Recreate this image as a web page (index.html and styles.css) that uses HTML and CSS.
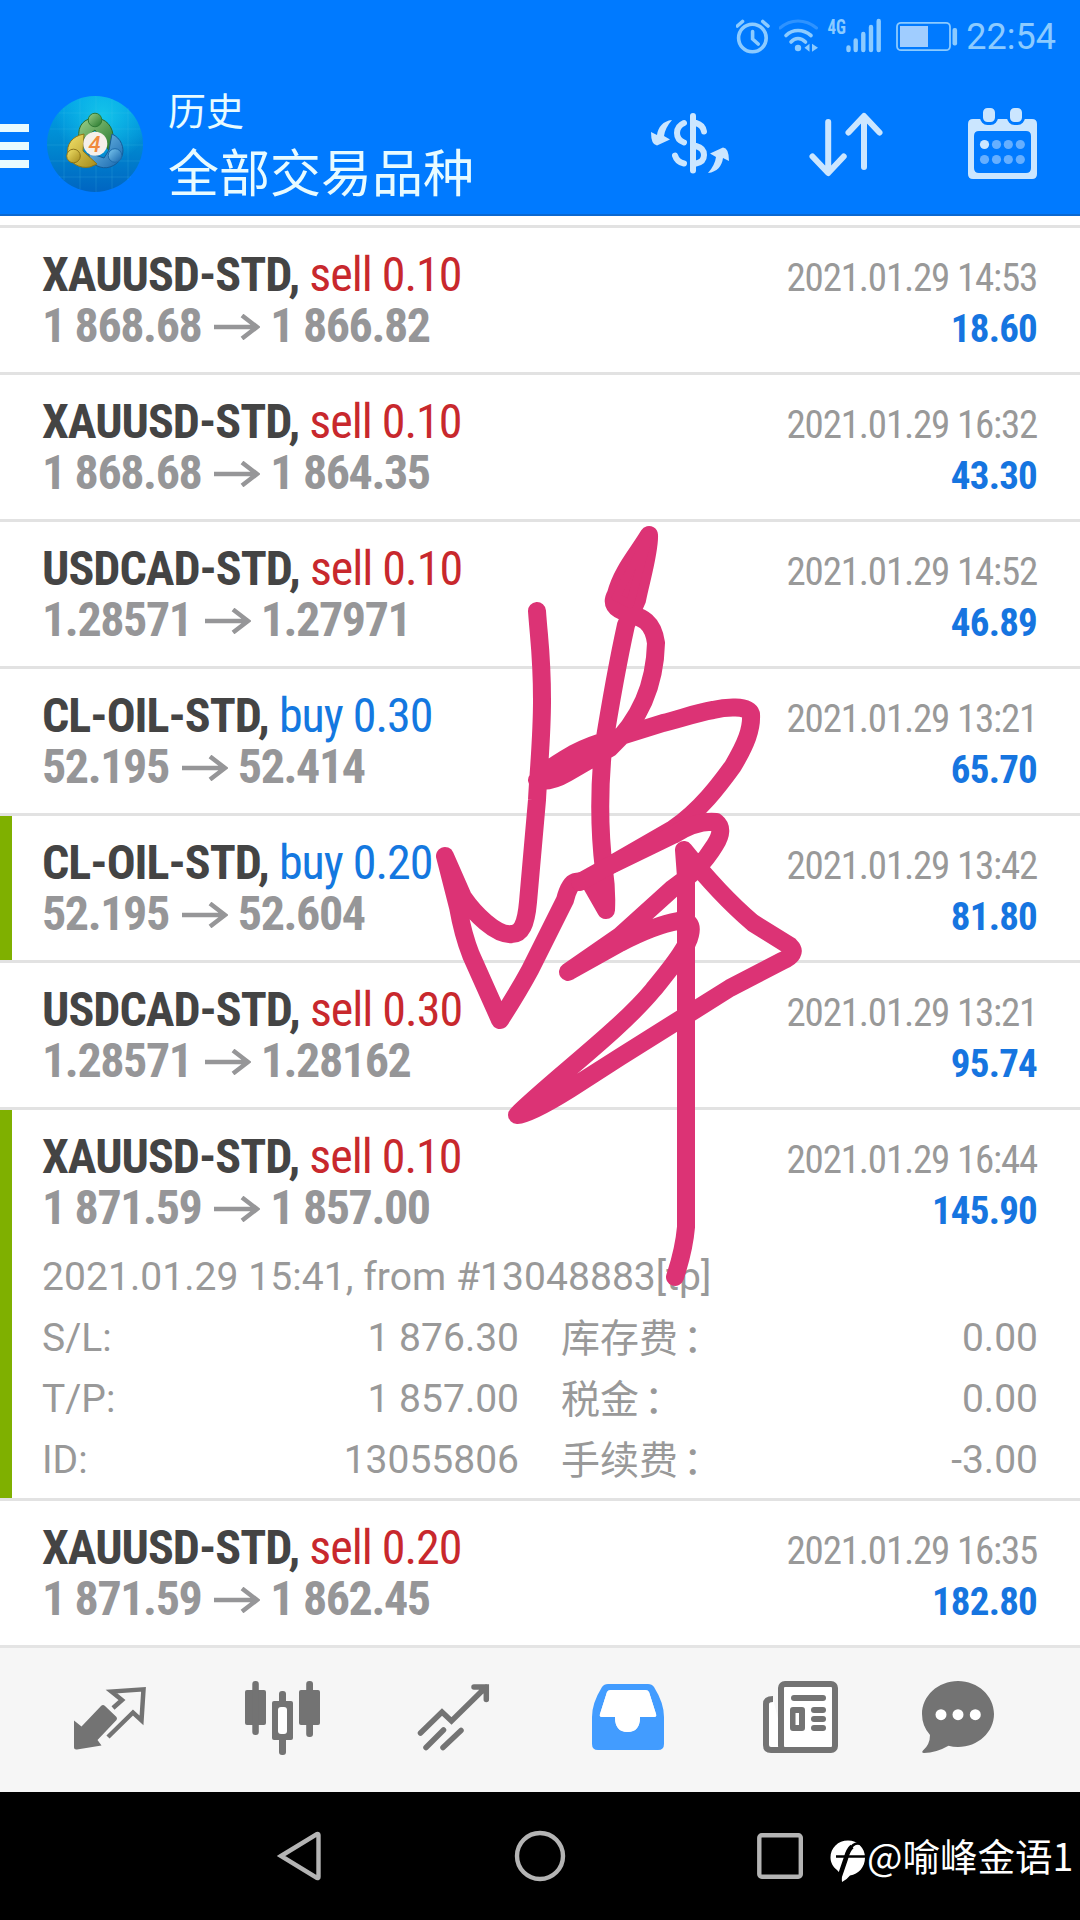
FILE: index.html
```html
<!DOCTYPE html>
<html lang="zh-CN">
<head>
    <meta charset="UTF-8">
    <meta name="viewport" content="width=device-width, initial-scale=1.0">
    <title>历史 - 全部交易品种</title>
    <link rel="stylesheet" href="styles.css">
</head>
<body>
    <div class="screen">
        <header class="header">
            <div class="status">
                <svg class="alarm" width="34" height="36" viewBox="735 18 34 36">
                    <circle cx="751.4" cy="38" r="13.8"/>
                    <path d="M751.6 31.5V39l5.6 5M736.3 26l5.2-4.5M767 26l-5.2-4.5"/>
                </svg>
                <svg class="wifi" width="40" height="36" viewBox="778 18 40 36">
                    <path class="faint" d="M779 28Q787 21 797 21T815.5 28"/>
                    <path d="M785 35.5Q790 30.5 797 30.5T810 35.5M790 42Q793 38.5 797 38.5T804.5 42"/>
                    <path class="solid" d="M803.5 47.7l5-4v8zM811 43.7v8l6-4z"/>
                    <circle class="solid" cx="797" cy="48" r="3.2"/>
                </svg>
                <svg class="signal" width="54" height="36" viewBox="827 18 54 36">
                    <text x="826.5" y="33.8" textLength="18.5" lengthAdjust="spacingAndGlyphs">4G</text>
                    <path d="M847.5 47.5v2.5M854.7 40.5V50M862.3 34v16M870 27v23M877.7 21v29"/>
                </svg>
                <svg class="battery" width="62" height="36" viewBox="895.5 18 62 36">
                    <rect class="case" x="896.5" y="22.8" width="53" height="27.4" rx="4"/>
                    <rect class="level" x="899.5" y="26" width="28" height="21"/>
                    <rect class="nub" x="952" y="28" width="4.6" height="17.5" rx="2"/>
                </svg>
                <span class="time">22:54</span>
            </div>
            <div class="toolbar">
                <div class="menu"><i></i><i></i><i></i></div>
                <svg class="logo" width="96" height="96" viewBox="0 0 96 96">
                    <defs>
                        <linearGradient id="sky" x1="0" y1="0" x2="0" y2="1">
                            <stop offset="0" stop-color="#00a3ea"/>
                            <stop offset=".5" stop-color="#0089d0"/>
                            <stop offset="1" stop-color="#0065c2"/>
                        </linearGradient>
                        <radialGradient id="glow" cx=".58" cy=".2" r=".5">
                            <stop offset="0" stop-color="#14c4ea"/>
                            <stop offset="1" stop-color="#14c4ea" stop-opacity="0"/>
                        </radialGradient>
                        <linearGradient id="green" x1="0" y1="0" x2="1" y2="1">
                            <stop offset="0" stop-color="#9bd08a"/>
                            <stop offset="1" stop-color="#24762a"/>
                        </linearGradient>
                        <linearGradient id="gold" x1="0" y1="0" x2="1" y2="1">
                            <stop offset="0" stop-color="#f3e36a"/>
                            <stop offset="1" stop-color="#a58a1a"/>
                        </linearGradient>
                        <linearGradient id="blue" x1="0" y1="0" x2="1" y2="1">
                            <stop offset="0" stop-color="#7cc8ef"/>
                            <stop offset="1" stop-color="#1463ab"/>
                        </linearGradient>
                    </defs>
                    <circle cx="48" cy="48" r="48" fill="url(#sky)"/>
                    <circle cx="48" cy="48" r="48" fill="url(#glow)"/>
                    <path class="mesh" d="M17 12v72M33 3v90M49 0v96M65 3v90M81 12v72M12 17h72M3 33h90M0 49h96M3 65h90M12 81h72"/>
                    <path d="M32 42C30 29 38 22 48 22S67 30 66 43L63 56 48 34 35 44Z" fill="url(#green)" stroke="#2a6b2a"/>
                    <path d="M65 38C74 42 78 52 75 60S62 74 53 71 42 64 42 57L57 62 62 54Z" fill="url(#blue)" stroke="#155c98"/>
                    <path d="M37 38C25 40 19 49 21 58S32 73 43 71L50 68 36 55Z" fill="url(#gold)" stroke="#8c7518"/>
                    <circle cx="48" cy="24" r="6.8" fill="url(#green)" stroke="#2f7a35"/>
                    <circle cx="26.5" cy="60" r="6.8" fill="url(#gold)" stroke="#8c7518"/>
                    <circle cx="68" cy="59.5" r="6.8" fill="url(#blue)" stroke="#1d6bab"/>
                    <circle cx="48.3" cy="47.7" r="12" fill="#f5f0ea"/>
                    <text x="47.5" y="55.5">4</text>
                </svg>
                <div class="title">
                    <p>历史</p>
                    <h1>全部交易品种</h1>
                </div>
                <svg class="action" width="80" height="76" viewBox="650 105 80 76">
                    <path d="M693 115v54.5M684 122Q677 125 677 132T684 141.5M696 122Q703 124 704 130.500M696 145Q704 147 704 154T696 162.500M675 154.500Q677 161 684 162.500"/>
                    <path id="turn" class="solid" d="M672 119C663 120 658 126 657 134L651 131Q651 144 657 144.500L670 138.500 664 135Q665 127 672 119Z"/>
                    <use href="#turn" transform="rotate(180 690 145.500)"/>
                </svg>
                <svg class="action sort" width="76" height="76" viewBox="808 105 76 76">
                    <path d="M828.200 121v50M812.500 155.500l15.700 16.500 15.500-16.500M864 116v50M848.500 131.500L864 115l15.500 16.500"/>
                </svg>
                <svg class="action calendar" width="70" height="76" viewBox="968 105 70 76">
                    <path class="solid" fill-rule="evenodd" d="M973 118h59q5 0 5 5v50q0 5-5 5h-59q-5 0-5-5v-50q0-5 5-5zM979 130q-5 0-5 5v32q0 5 5 5h47q5 0 5-5v-32q0-5-5-5z"/>
                    <rect class="ring" x="981.500" y="105.500" width="15" height="17" rx="6"/>
                    <rect class="ring" x="1008.500" y="105.500" width="15" height="17" rx="6"/>
                    <circle class="solid" cx="984.500" cy="143.500" r="4.600"/>
                    <g class="dim">
                        <circle cx="996.500" cy="143.500" r="4.600"/>
                        <circle cx="1008.300" cy="143.500" r="4.600"/>
                        <circle cx="1020.300" cy="143.500" r="4.600"/>
                        <circle cx="984.500" cy="158.500" r="4.600"/>
                        <circle cx="996.500" cy="158.500" r="4.600"/>
                        <circle cx="1008.300" cy="158.500" r="4.600"/>
                        <circle cx="1020.300" cy="158.500" r="4.600"/>
                    </g>
                </svg>
            </div>
        </header>

        <main class="list" id="list"></main>

        <nav class="tabs">
            <svg width="76" height="76" viewBox="72 1680 76 76">
                <path class="fill" d="M74 1720.500l7.500 6L101 1706q2-2 4 0l11.500 11q1 1.500 0 3L97.500 1740l4 5.500-24.500 4q-3 .500-3-2z"/>
                <path d="M113 1708l9-8-10.500-8.500 32-2.200-2 31-8.500-7.800-25 24.500"/>
            </svg>
            <svg width="76" height="76" viewBox="244 1680 76 76">
                <g class="fill">
                    <rect x="244" y="1690" width="21" height="35" rx="2"/>
                    <rect x="251.300" y="1681" width="6.500" height="54" rx="3"/>
                    <rect x="298" y="1690" width="21" height="35" rx="2"/>
                    <rect x="305.200" y="1681" width="6.800" height="56" rx="3"/>
                    <rect x="278" y="1691" width="7" height="64" rx="3"/>
                    <rect x="271" y="1701" width="21" height="39" rx="2"/>
                </g>
                <rect class="hole" x="277" y="1707" width="9" height="27" rx="3"/>
            </svg>
            <svg width="76" height="76" viewBox="417 1680 76 76">
                <path class="round" d="M420.500 1733l21.500-21 9.500 9 34.500-34M474 1687h12.300v12.500M426 1747.500l17.500-17.500M443 1747.500l18-17"/>
            </svg>
            <svg class="active" width="76" height="76" viewBox="589 1680 76 76">
                <path class="fill" fill-rule="evenodd" d="M607 1684h40q4 0 6 3 10 16 10 30v27q0 6-6 6h-60q-6 0-6-6v-27q0-14 10-30 2-3 6-3zM610 1690q-3 0-4 2l-7 22q-1 3 2 3h13q0 15 12.500 15t12.500-15h14q3 0 2-3l-7-22q-1-2-4-2z"/>
                <path class="white" d="M610 1690q-3 0-4 2l-7 22q-1 3 2 3h13q0 15 12.500 15t12.500-15h14q3 0 2-3l-7-22q-1-2-4-2z"/>
            </svg>
            <svg width="78" height="76" viewBox="762 1680 78 76">
                <path class="tab-edge" d="M773 1699q-7 0-7 5v41q0 5 5 5h15"/>
                <rect class="page" x="781" y="1684" width="54" height="66" rx="4"/>
                <g class="fill">
                    <rect x="791" y="1695" width="35" height="6" rx="3"/>
                    <path fill-rule="evenodd" d="M793 1707h9q3 0 3 3v18q0 3-3 3h-9q-3 0-3-3v-18q0-3 3-3zM795.500 1713v12h3.500v-12z"/>
                    <rect x="811" y="1707" width="15" height="6" rx="3"/>
                    <rect x="811" y="1716" width="15" height="6" rx="3"/>
                    <rect x="811" y="1725" width="15" height="6" rx="3"/>
                </g>
            </svg>
            <svg class="chat" width="74" height="76" viewBox="921 1680 74 76">
                <path class="fill" d="M958 1681c20 0 36 15 36 33s-16 33-36 33q-5 0-9.500-1.200Q936 1753 924 1753q-3-.500-1-2.500 7-6 7-15.500-8-9-8-21c0-18 16-33 36-33z"/>
                <g class="white">
                    <circle cx="941" cy="1714.700" r="5.500"/>
                    <circle cx="958" cy="1714.700" r="5.500"/>
                    <circle cx="975.300" cy="1714.700" r="5.500"/>
                </g>
            </svg>
        </nav>

        <footer class="softkeys">
            <svg class="back" width="46" height="54" viewBox="276 1829 46 54">
                <path d="M281 1856l36-22q1.500-.500 1.500 1v42q0 1.500-1.500 1z"/>
            </svg>
            <svg class="home" width="54" height="54" viewBox="513 1829 54 54">
                <circle cx="540" cy="1856" r="23"/>
            </svg>
            <svg class="recent" width="50" height="54" viewBox="755 1829 50 54">
                <rect x="759.300" y="1835.300" width="41.500" height="41.500" rx="2.500"/>
            </svg>
            <div class="watermark">
                <svg width="37" height="44" viewBox="829 1839 37 44">
                    <path class="disc" d="M848 1840.500c9.500 0 17 7.500 17 17s-6.500 17-15 18q-3 4-8 6.500l-.500-7-4.500-5c-4-3-6.500-7.500-6.500-12.500 0-9.500 7.500-17 17.500-17z"/>
                    <path class="cut stem" d="M852 1846.500Q848 1850 846 1858L838.500 1880"/>
                    <path class="cut" d="M862 1844.500Q854 1841 849.500 1850M836 1856.500h30"/>
                </svg>
                <span>@喻峰金语1</span>
            </div>
        </footer>

        <!-- pen signature over the list -->
        <svg class="pen" width="1080" height="1920" viewBox="0 0 1080 1920">
            <path d="M537 611C539 640 542 655 542 700C542 740 538 777 537 800L528 902C526 925 521 934 512 934C496 936 474 913 463 897L445 856L458 907Q463 935 471 955L500 1020Q517 994 530 970L565 900Q569 884 575 882C590 881 595 874 607 867L673 829C700 811 720 784 733 766C746 744 752 729 751 714C748 705 725 707 713 710C695 713 680 719 663 723L615 738Q590 745 573 754Q545 770 537 780Q550 783 567 773L610 748C640 720 655 685 656 643C653 620 640 617 628 613C614 609 611 603 616 594C622 571 637 555 649 535C650 550 641 580 637 600L626 625Q615 675 603 750Q597 812 604 870Q607 890 606 910L590 882"/>
            <path d="M580 882L607 867L673 835Q697 820 716 822Q725 829 715 845Q700 870 672 889L620 936 568 972L620 943Q655 925 678 921Q694 919 690 935C687 950 665 975 653 990C620 1030 550 1082 517 1115Q530 1114 570 1089L620 1057L730 988L782 961Q798 954 790 946L753 923Q720 895 684 850L686 877V1227Q684 1250 675 1277"/>
            <path class="blot" d="M649 535L616 597 630 604Z"/>
        </svg>
    </div>
    <script>
        const orders = [
            { symbol: "XAUUSD-STD", side: "sell", lots: "0.10", open: "1 868.68", close: "1 866.82", time: "2021.01.29 14:53", profit: "18.60" },
            { symbol: "XAUUSD-STD", side: "sell", lots: "0.10", open: "1 868.68", close: "1 864.35", time: "2021.01.29 16:32", profit: "43.30" },
            { symbol: "USDCAD-STD", side: "sell", lots: "0.10", open: "1.28571", close: "1.27971", time: "2021.01.29 14:52", profit: "46.89" },
            { symbol: "CL-OIL-STD", side: "buy", lots: "0.30", open: "52.195", close: "52.414", time: "2021.01.29 13:21", profit: "65.70" },
            { symbol: "CL-OIL-STD", side: "buy", lots: "0.20", open: "52.195", close: "52.604", time: "2021.01.29 13:42", profit: "81.80", marked: true },
            { symbol: "USDCAD-STD", side: "sell", lots: "0.30", open: "1.28571", close: "1.28162", time: "2021.01.29 13:21", profit: "95.74" },
            { symbol: "XAUUSD-STD", side: "sell", lots: "0.10", open: "1 871.59", close: "1 857.00", time: "2021.01.29 16:44", profit: "145.90", marked: true,
              note: "2021.01.29 15:41, from #13048883[tp]",
              details: [["S/L:", "1 876.30", "库存费", "0.00"], ["T/P:", "1 857.00", "税金", "0.00"], ["ID:", "13055806", "手续费", "-3.00"]] },
            { symbol: "XAUUSD-STD", side: "sell", lots: "0.20", open: "1 871.59", close: "1 862.45", time: "2021.01.29 16:35", profit: "182.80" }
        ];

        const arrow = '<svg class="arrow" width="46" height="26" viewBox="0 0 46 26"><path d="M0 13h43M28 1.500L43 13 28 24.500"/></svg>';

        function renderDetails(order) {
            if (!order.details) return "";
            const rows = order.details.map(([key, value, label, amount]) => `
                <span>${key}</span><span>${value}</span>
                <span class="label">${label}<b>：</b></span><span>${amount}</span>`).join("");
            return `<div class="note">${order.note}</div><div class="details">${rows}</div>`;
        }

        document.getElementById("list").innerHTML = orders.map(order => `
            <article class="order ${order.marked ? "marked" : ""}">
                <div class="line">
                    <div class="name">${order.symbol}, <span class="${order.side}">${order.side} ${order.lots}</span></div>
                    <div class="date">${order.time}</div>
                </div>
                <div class="line">
                    <div class="price"><span>${order.open}</span>${arrow}<span>${order.close}</span></div>
                    <div class="profit">${order.profit}</div>
                </div>
                ${renderDetails(order)}
            </article>`).join("");
    </script>
</body>
</html>
```
FILE: styles.css
```css
* {
    box-sizing: border-box;
}

body {
    margin: 0;
    background: #fff;
    font-family: Roboto, "Noto Sans CJK SC", sans-serif;
}

svg {
    display: block;
    flex: none;
    fill: none;
}

.screen {
    position: relative;
    width: 1080px;
    height: 1920px;
    display: flex;
    flex-direction: column;
    overflow: hidden;
}

/* header */
.header {
    height: 216px;
    background: #007aff;
    border-bottom: 2px solid #0c68d0;
    color: #e8fbff;
}

.status {
    height: 72px;
    padding: 0 24px;
    display: flex;
    justify-content: flex-end;
    align-items: center;
    color: #8ccbff;
}

.status svg {
    stroke: #8ccbff;
    stroke-width: 3.6;
    stroke-linecap: round;
}

.status .solid,
.status .nub {
    fill: #8ccbff;
    stroke: none;
}

.wifi { margin-left: 9px; }
.wifi .faint { stroke: #2e93ff; stroke-width: 3; }

.signal { margin-left: 9px; overflow: visible; }

.status .signal { stroke-width: 4.4; }

.signal text {
    font-size: 20px;
    font-weight: 700;
    font-stretch: 75%;
    fill: #8ccbff;
    stroke: none;
}

.battery { margin-left: 14.5px; }
.status .case { stroke-width: 1.8; }
.battery .level { fill: #a0cdff; stroke: none; }

.time {
    width: 90px;
    margin-left: 8px;
    padding-top: 3px;
    font-size: 36px;
    line-height: 69px;
    text-align: right;
    white-space: nowrap;
}

.toolbar {
    height: 144px;
    padding: 0 42px 0 0;
    display: flex;
    align-items: center;
}

.menu {
    width: 30px;
    height: 44px;
    margin-top: 4px;
    display: flex;
    flex-direction: column;
    justify-content: space-between;
}

.menu i {
    height: 8px;
    background: #e8fbff;
}

.logo { margin-left: 18px; }
.logo .mesh { stroke: #4cc6f0; stroke-opacity: .18; }

.logo text {
    font-size: 22px;
    font-weight: 500;
    font-style: italic;
    text-anchor: middle;
    fill: #f08a3c;
}

.title {
    width: 482px;
    margin: -6px 0 0 25px;
    flex: none;
    font-family: "Noto Sans CJK SC", sans-serif;
    font-weight: 400;
}

.title p {
    margin: 0;
    font-size: 38px;
    line-height: 56px;
}

.title h1 {
    margin: 1px 0 0;
    font-size: 51px;
    line-height: 64px;
    font-weight: 400;
}

.action {
    stroke: #cbe6ff;
    stroke-width: 6;
    stroke-linecap: round;
    stroke-linejoin: round;
}

.action .solid,
.action use {
    fill: #cbe6ff;
    stroke: none;
}

.sort { margin-left: 78px; }
.calendar { margin-left: 84px; }
.ring { fill: #cbe6ff; stroke: #007aff; stroke-width: 3; }
.dim { fill: #66afff; stroke: none; }

/* history list */
.list {
    margin-top: 9px;
    height: 1423px;
}

.order {
    height: 147px;
    border-top: 3px solid #e2e2e2;
    padding: 21px 42px 0;
    font-stretch: 75%;
}

.marked {
    background: linear-gradient(#7fb000, #7fb000) no-repeat 0 0 / 12px 100%;
}

.line {
    display: flex;
    justify-content: space-between;
    height: 51px;
    line-height: 51px;
    white-space: nowrap;
}

.name {
    font-size: 48px;
    font-weight: 700;
    letter-spacing: -1px;
    color: #444;
}

.name span { font-weight: 400; }
.sell { color: #c8282d; }
.buy { color: #1478e0; }

.date {
    padding: 4px 1px 0 0;
    font-size: 39px;
    letter-spacing: -1.2px;
    color: #999;
}

.price {
    display: flex;
    align-items: center;
    font-size: 48px;
    font-weight: 700;
    letter-spacing: -1.4px;
    color: #969698;
}

.arrow {
    margin: 3px 10px 0 13px;
    stroke: #969698;
    stroke-width: 4.5;
}

.profit {
    padding: 4px 1px 0 0;
    font-size: 39px;
    font-weight: 700;
    letter-spacing: -.8px;
    color: #1675e0;
}

.order:has(.details) { height: 391px; }

.note,
.details {
    font-size: 39px;
    font-stretch: 100%;
    line-height: 61px;
    color: #999;
}

.note {
    margin-top: 14px;
    letter-spacing: .06px;
}

.details {
    display: grid;
    grid-template-columns: 160px 317px 240px 1fr;
    grid-auto-rows: 61px;
}

.details span:nth-child(even) { text-align: right; }

.details .label {
    margin-top: -3px;
    padding-left: 42px;
    font-family: "Noto Sans CJK SC", sans-serif;
}

.label b {
    padding-left: 5px;
    font-weight: 400;
}

/* bottom tabs */
.tabs {
    height: 147px;
    margin-top: -3px;
    padding: 0 72px;
    border-top: 3px solid #e4e4e4;
    background: #f6f6f6;
    display: flex;
    gap: 96.5px;
    align-items: center;
    flex: none;
}

.tabs svg {
    margin-top: -4px;
    stroke: #737373;
    stroke-width: 4.5;
}

.tabs .chat { margin-left: -15.5px; }

.tabs .fill { fill: #737373; stroke: none; }
.tabs .hole { fill: #fff; stroke: none; }
.tabs .white { fill: #fff; stroke: none; }
.tabs .active .fill { fill: #429cff; }
.tabs .round { stroke-width: 5.5; stroke-linecap: round; }
.tabs .page { fill: #fff; stroke-width: 6; }
.tabs .tab-edge { fill: #fff; stroke-width: 6; }

/* system keys */
.softkeys {
    height: 128px;
    padding-left: 276px;
    background: #000;
    display: flex;
    align-items: center;
    flex: none;
}

.softkeys svg {
    stroke: #b4b4b4;
    stroke-width: 4.4;
}

.home { margin-left: 191px; }
.recent { margin-left: 188px; }

.watermark {
    margin-left: 24px;
    display: flex;
    align-items: center;
    color: #fff;
    font: 37.5px/50px "Noto Sans CJK SC", sans-serif;
    white-space: nowrap;
}

.watermark span {
    margin: -2px 0 0 1px;
}

.watermark svg { margin-top: 9px; }
.watermark .disc { fill: #fff; stroke: none; }
.watermark .cut { stroke: #000; stroke-width: 2.6; }
.watermark .stem { stroke-width: 4.6; }

.pen {
    position: absolute;
    left: 0;
    top: 0;
    stroke: #dc3375;
    stroke-width: 18;
    stroke-linecap: round;
    stroke-linejoin: round;
}

.pen .blot {
    fill: #dc3375;
    stroke-width: 8;
}
```
